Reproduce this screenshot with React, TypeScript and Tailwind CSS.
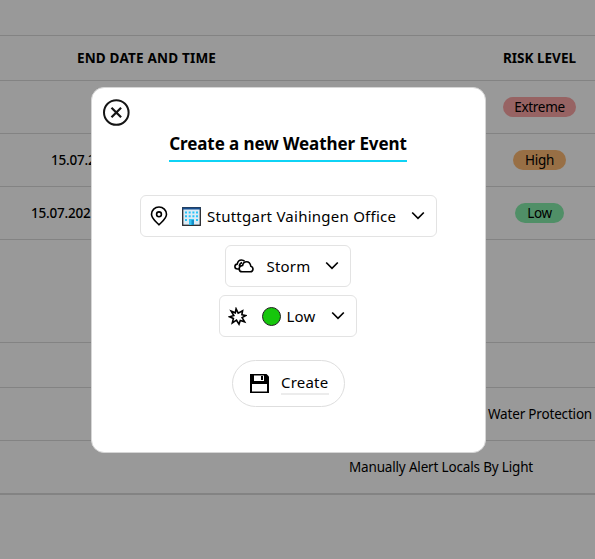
import type { ReactNode } from "react";

function Row({ className, children }: { className: string; children?: ReactNode }) {
  return <div className={`flex shrink-0 items-center justify-between border-[#dadada] ${className}`}>{children}</div>;
}

function DateCell({ className, children }: { className: string; children?: ReactNode }) {
  return <div className={`w-[293px] whitespace-nowrap ${className}`}>{children}</div>;
}

function RiskCell({ children }: { children: ReactNode }) {
  return <div className="flex w-[111px] justify-center whitespace-nowrap">{children}</div>;
}

function Pill({ className, children }: { className: string; children: ReactNode }) {
  return <span className={`flex h-5 items-center justify-center rounded-full text-[13.5px] tracking-[-0.3px] ${className}`}>{children}</span>;
}

function Chevron() {
  return (
    <svg width="14" height="10" viewBox="0 0 14 10" fill="none" stroke="#000" strokeWidth="1.7" className="shrink-0">
      <path d="M1.2 1.500 7 7.300l5.800-5.800" />
    </svg>
  );
}

function PinIcon() {
  return (
    <svg width="18" height="20" viewBox="0 0 18 20" fill="none" stroke="#000" strokeWidth="1.600">
      <path d="M9 18.800C7 16.400 1.500 13 1.500 8.300a7.500 7.300 0 0 1 15 0C16.500 13 11 16.400 9 18.800Z" strokeLinejoin="round" />
      <circle cx="9" cy="8.300" r="2.400" />
    </svg>
  );
}

function OfficeIcon() {
  return (
    <svg width="19" height="19" viewBox="0 0 19 19">
      <rect x=".7" y=".7" width="17.600" height="17.600" fill="#dcebf5" stroke="#25272c" strokeWidth="1.300" />
      <path d="M.5.5h18v2H.5z" fill="#174f91" />
      <g fill="#28c4f7">
        <path d="M3 4.500h2v2H3zM6.700 4.500h2v2h-2zM10.400 4.500h2v2h-2zM14 4.500h2v2h-2zM3 8.200h2v2H3zM6.700 8.200h2v2h-2zM10.400 8.200h2v2h-2zM14 8.200h2v2h-2zM3 12h2v2H3zM14 12h2v2h-2z" />
      </g>
      <path d="M7 12h5v6H7z" fill="#36c5f3" />
      <path d="M9.500 13h2.500v5H9.500z" fill="#1590c9" />
    </svg>
  );
}

function CloudsIcon() {
  return (
    <svg width="20" height="14" viewBox="0 0 20 14" fill="none" stroke="#000" strokeWidth="1.600" strokeLinejoin="round">
      <path d="M8.200 12.800h8.100a2.800 2.800 0 0 0 .6-5.500C16.300 4.300 14.700 2.800 12.600 2.800c-2.200 0-3.600 1.500-4 3.700-2.100.1-3.400 1.400-3.400 3.200 0 1.800 1.200 3.100 3 3.100Z" />
      <path d="M5 10H3.500C2 10 .9 9.100.9 7.600c0-1.400.9-2.300 2.300-2.500C3.700 2.500 5.300 1 7.500 1c1.300 0 2.300.4 3.100 1.300M5.300 7.300c.1-1.900 1-3.200 2.800-3.900" />
    </svg>
  );
}

function BurstIcon() {
  return (
    <svg width="19" height="19" viewBox="0 0 19 19" fill="none" stroke="#000" strokeWidth="1.600" strokeLinejoin="miter">
      <path d="m8.100 1.800 2.100 4.300 4.400-2.300-.7 3.900 3.900.9-3.700 2 2.500 4.200-4.300-1.400-1.300 3.700-2.500-3.900-4.200 2.800 1.100-4.600-3.800-1.600 4.200-1.300L3.200 4.200l4.100 1.600Z" />
    </svg>
  );
}

function SaveIcon() {
  return (
    <svg width="19" height="19" viewBox="0 0 19 19">
      <path d="M0 0h16.500L19 2.500V19H0Z" fill="#000" />
      <path d="M4 1.500h10v5.500H4zM2 10h15v7.500H2z" fill="#fff" />
      <path d="M11 2h2v4h-2z" fill="#000" />
    </svg>
  );
}

function Field({ className, children }: { className: string; children: ReactNode }) {
  return (
    <div className={`flex h-[42px] items-center whitespace-nowrap rounded-[6px] border border-[#e3e3e3] ${className}`}>
      {children}
    </div>
  );
}

export default function App() {
  return (
    <div className="relative h-[559px] w-[595px] overflow-hidden bg-white font-['Noto_Sans',sans-serif] text-black">
      <div className="flex flex-col text-[13.5px]">
        <Row className="h-9 border-b" />
        <Row className="h-[45px] border-b font-bold">
          <DateCell className="text-center tracking-[0.2px]">END DATE AND TIME</DateCell>
          <RiskCell>RISK LEVEL</RiskCell>
        </Row>
        <Row className="h-[53px] border-b">
          <DateCell className="" />
          <RiskCell><Pill className="w-[73px] bg-[#fca5a5]">Extreme</Pill></RiskCell>
        </Row>
        <Row className="h-[53px] border-b">
          <DateCell className="pl-[51px] font-medium tracking-[-0.2px]">15.07.2021</DateCell>
          <RiskCell><Pill className="w-[53px] bg-[#fdba74]">High</Pill></RiskCell>
        </Row>
        <Row className="h-[53px] border-b">
          <DateCell className="pl-[31px] font-medium tracking-[-0.2px]">15.07.2021</DateCell>
          <RiskCell><Pill className="w-[49px] bg-[#86efac]">Low</Pill></RiskCell>
        </Row>
        <Row className="h-[103px] border-b" />
        <Row className="h-[45px] border-b" />
        <Row className="h-[53px] border-b">
          <span className="ml-[488px] whitespace-nowrap tracking-[-0.18px]">Water Protection</span>
        </Row>
        <Row className="h-[54px] border-b-2">
          <span className="ml-[349px] whitespace-nowrap tracking-[-0.17px]">Manually Alert Locals By Light</span>
        </Row>
      </div>

      <div className="absolute inset-0 bg-black/40" />

      <div className="absolute left-[91px] top-[87px] flex h-[366px] w-[395px] flex-col items-center rounded-[13px] border border-[#d6d6d6] bg-white">
        <button className="ml-[11px] mt-[11px] self-start" aria-label="Close">
          <svg width="28" height="28" viewBox="0 0 28 28" fill="none" stroke="#151515" strokeWidth="2">
            <circle cx="13.300" cy="13.500" r="12.300" />
            <path d="m8.500 8.700 9.600 9.600m0-9.600-9.600 9.600" strokeWidth="2.200" />
          </svg>
        </button>
        <h1 className="mr-px mt-1 flex h-[31px] w-[238px] justify-center whitespace-nowrap border-b-2 border-[#0fd3f5] text-[17px] font-bold leading-[26px] tracking-[-0.08px]">
          Create a new Weather Event
        </h1>
        <div className="mt-[33px] flex flex-col items-center gap-2 text-[15px]">
          <Field className="w-[297px] pl-[9px]">
            <PinIcon />
            <span className="ml-[14px]"><OfficeIcon /></span>
            <span className="ml-[6px] w-[190px] pt-px tracking-[0.25px]">Stuttgart Vaihingen Office</span>
            <span className="ml-[14px]"><Chevron /></span>
          </Field>
          <Field className="mr-0.5 w-[126px] pl-[8px]">
            <CloudsIcon />
            <span className="ml-[13px] w-[44px] pt-px tracking-[0.2px]">Storm</span>
            <span className="ml-[14px]"><Chevron /></span>
          </Field>
          <Field className="mr-0.5 w-[138px] pl-[8px]">
            <BurstIcon />
            <span className="ml-[15px] size-[19px] rounded-full border border-[#202020] bg-[#16c60c]" />
            <span className="ml-[6px] w-[30px] pt-px tracking-[0.2px]">Low</span>
            <span className="ml-[14px]"><Chevron /></span>
          </Field>
        </div>
        <button className="mt-[23px] flex h-[47px] w-[113px] items-center rounded-full border border-[#dedede] pl-[17px] text-[15px]">
          <SaveIcon />
          <span className="ml-3 h-[23px] w-[48px] border-b-2 border-[#ececec] text-left leading-5 tracking-[0.2px]">Create</span>
        </button>
      </div>
    </div>
  );
}
